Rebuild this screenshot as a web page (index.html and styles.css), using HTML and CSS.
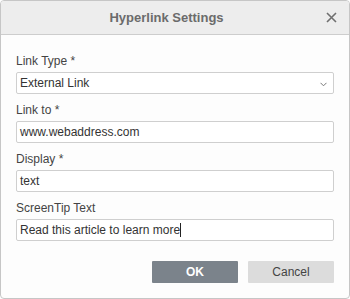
FILE: index.html
```html
<!DOCTYPE html>
<html lang="en">
<head>
  <meta charset="UTF-8" />
  <title>Hyperlink Settings</title>
  <link rel="stylesheet" href="styles.css">
</head>
<body>
  <div class="dialog">
    <div class="dialog-header">
      <span class="title">Hyperlink Settings</span>
      <span class="close">
        <svg width="11" height="11" viewBox="0 0 11 11"><path d="M1 1L10 10M10 1L1 10" stroke="#6f6f6f" stroke-width="1.6"/></svg>
      </span>
    </div>

    <div class="dialog-body">
      <div class="group">
        <label>Link Type *</label>
        <div class="field select">
          <span>External Link</span>
          <svg class="chevron" width="7" height="5" viewBox="0 0 7 5"><path d="M0.5 0.8L3.5 3.8L6.5 0.8" fill="none" stroke="#777" stroke-width="1"/></svg>
        </div>
      </div>
      <div class="group">
        <label>Link to *</label>
        <div class="field">www.webaddress.com</div>
      </div>
      <div class="group">
        <label>Display *</label>
        <div class="field">text</div>
      </div>
      <div class="group">
        <label>ScreenTip Text</label>
        <div class="field">Read this article to learn more<span class="caret"></span></div>
      </div>

      <div class="buttons">
        <button class="btn primary">OK</button>
        <button class="btn">Cancel</button>
      </div>
    </div>
  </div>
</body>
</html>
```

FILE: styles.css
```css
html, body {
  margin: 0;
  padding: 0;
  background: #fff;
}
body {
  font-family: "Liberation Sans", Arial, sans-serif;
  font-size: 12px;
  color: #444;
}
.dialog {
  box-sizing: border-box;
  width: 350px;
  height: 299px;
  border: 1px solid #c6c6c6;
  border-radius: 4px;
  background: #fdfdfd;
  overflow: hidden;
}
.dialog-header {
  position: relative;
  height: 33px;
  background: #ededed;
  border-bottom: 1px solid #cdcdcd;
  display: flex;
  align-items: center;
  justify-content: center;
}
.title {
  font-size: 13px;
  font-weight: bold;
  color: #6b6b6b;
  margin-right: 17px;
}
.close {
  position: absolute;
  right: 12px;
  top: 11px;
  display: flex;
}
.dialog-body {
  padding: 19px 15px 0 15px;
}
.group {
  margin-bottom: 9px;
}
label {
  display: block;
  height: 14px;
  line-height: 14px;
  margin-bottom: 4px;
  color: #444;
}
.field {
  box-sizing: border-box;
  height: 22px;
  line-height: 20px;
  border: 1px solid #cfcfcf;
  border-radius: 2px;
  background: #fff;
  padding: 0 3px;
  color: #333;
  display: flex;
  align-items: center;
}
.select {
  justify-content: space-between;
}
.chevron {
  margin-right: 3px;
  margin-top: 2px;
}
.caret {
  display: inline-block;
  width: 1px;
  height: 14px;
  background: #222;
}
.buttons {
  display: flex;
  justify-content: flex-end;
  gap: 10px;
  margin-top: 20px;
}
.btn {
  width: 86px;
  height: 22px;
  border: none;
  border-radius: 1px;
  background: #dcdcdc;
  color: #444;
  font-family: "Liberation Sans", Arial, sans-serif;
  font-size: 12px;
  padding: 0;
}
.btn.primary {
  background: #7b838b;
  color: #fff;
  font-weight: bold;
}
```
